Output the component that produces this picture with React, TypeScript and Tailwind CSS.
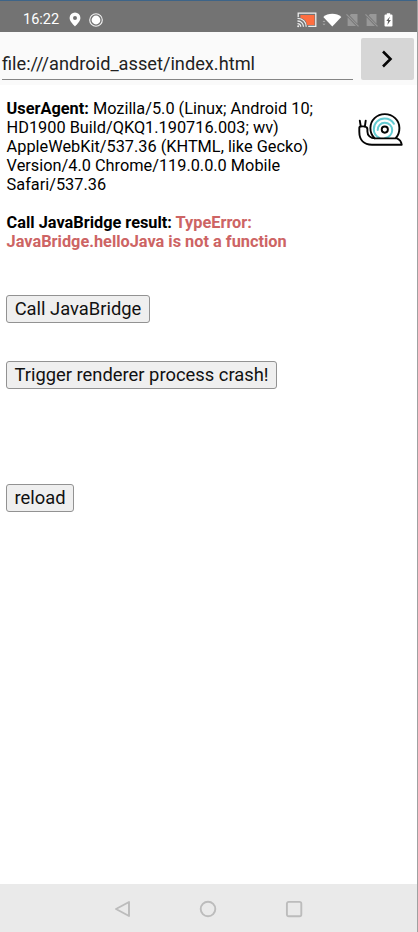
import React from "react";

const Pin = () => (
  <svg width="12" height="15" viewBox="0 0 12 15">
    <path fillRule="evenodd" fill="#fff" d="M6 .5a5.400 5.400 0 0 0-5.400 5.400C.6 9.700 6 14.300 6 14.300s5.400-4.600 5.400-8.400A5.400 5.400 0 0 0 6 .5Zm0 3.400a2 2 0 1 1 0 4 2 2 0 0 1 0-4Z" />
  </svg>
);

const Record = () => (
  <svg width="14" height="14" viewBox="0 0 14 14">
    <circle cx="7" cy="7" r="6.300" fill="none" stroke="#f2f2f2" strokeWidth="1.100" />
    <circle cx="7" cy="7" r="4.400" fill="#fff" />
  </svg>
);

const Cast = () => (
  <svg width="20" height="16" viewBox="0 0 20 16">
    <path fill="#ff6e40" d="M3.500 3h14v10h-7.500A7 7 0 0 0 3.500 6Z" />
    <path fill="none" stroke="#eee" strokeWidth="1.300" d="M1.200 5V1.200h17.600v13.200h-7.600M.5 6.300a8.300 8.300 0 0 1 8.700 8.500M.5 9a5.800 5.800 0 0 1 6 5.800M.5 11.600a3 3 0 0 1 3.200 3.200" />
    <circle cx="1.200" cy="14.300" r="1" fill="#eee" />
  </svg>
);

const Wifi = () => (
  <svg width="20" height="14" viewBox="0 0 20 14">
    <path fill="#fff" d="M1.300 4C5.600-.4 15-.4 19.300 4L10.300 13.600Z" />
    <path fill="#aaa" d="m.5 9 1.500-1.600L3.500 9Zm0 1.700h3L2 12.300Z" />
  </svg>
);

const NoSim = () => (
  <svg width="13" height="14" viewBox="0 0 13 14">
    <path fill="#989898" d="M5 1h6.500v9.700L3.700 2.600ZM1.600 4.300 10 13H1.600Z" />
    <path stroke="#989898" strokeWidth="1.200" d="m.5 1.300 12 12" />
  </svg>
);

const Battery = () => (
  <svg width="9" height="14" viewBox="0 0 9 14">
    <path fill="#fff" d="M2.800.3h3.400v1.300h1.300a1 1 0 0 1 1 1v10a1 1 0 0 1-1 1h-6a1 1 0 0 1-1-1v-10a1 1 0 0 1 1-1h1.300Z" />
    <path fill="#606060" d="M6 3.500 2.300 8h1.800l-.7 4L6.900 7H4.800Z" />
  </svg>
);

const Snail = () => (
  <svg width="46" height="34" viewBox="0.500 0 46 34" fill="none" strokeLinecap="round" strokeLinejoin="round">
    <g stroke="#63cbd2" strokeWidth="2">
      <path d="M22 25C18.700 23.300 16.300 20.200 16.300 16.200c0-6 4.700-10.600 10.700-10.600 4.200 0 7.600 2 9.400 5.200" />
      <path d="M20.200 17c0-4 3-7.200 7-7.200 4.200 0 7.500 3.100 7.500 7.200 0 4.300-3.100 7.500-7 7.900" />
    </g>
    <g stroke="#050505" strokeWidth="1.900">
      <circle cx="27.300" cy="16.600" r="3.100" />
      <path d="M17 25.200a14.300 14.300 0 0 1-4.100-10.200c0-7.900 6.400-13.900 14.400-13.900S41.900 7.200 41.900 15c0 4-1.200 7.500-3.500 10" />
      <path d="M1.800 14.500v4.300C1.800 27 6.500 31.700 14.500 31.700h29.700c-.4-2.900-2-5.200-4.700-6.300H17.500c-4.500 0-7.600-3-7.600-7v-2.500c0-3-8.100-3.200-8.100-1.400Z" />
      <path d="M3.200 13 2.300 7.600M7.400 13.300l.8-5.700" />
    </g>
  </svg>
);

const PageButton = ({ className, children }: { className: string; children: React.ReactNode }) => (
  <button className={`block h-[28px] whitespace-nowrap rounded-[3px] border border-[#929292] bg-[#efefef] text-center text-[18.380px] leading-[26px] text-[#111] ${className}`}>
    {children}
  </button>
);

export default function App() {
  return (
    <div className="flex h-[932px] w-[418px] flex-col overflow-hidden border-r border-[#a0a0a0] bg-white font-['Roboto',sans-serif] text-black">
      <div className="flex h-[32px] shrink-0 items-center border-t border-[#3d6488] bg-[#737373] pt-[6px] pl-[23px]">
        <span className="w-[45.500px] whitespace-nowrap text-[14.500px] leading-[18px] text-white">16:22</span>
        <Pin />
        <div className="ml-[8.500px]"><Record /></div>
        <div className="ml-[194px]"><Cast /></div>
        <div className="ml-[5px]"><Wifi /></div>
        <div className="ml-[4px]"><NoSim /></div>
        <div className="ml-[6px]"><NoSim /></div>
        <div className="ml-[6px]"><Battery /></div>
      </div>

      <header className="flex h-[53px] shrink-0 items-start bg-[#fafafa] pl-[2px]">
        <div className="mt-[16px] h-[32px] w-[351px] whitespace-nowrap border-b border-[#858585] text-[18.220px] leading-[32px] text-[#222]">
          file:///android_asset/index.html
        </div>
        <button className="mt-[6px] ml-[8px] flex h-[42px] w-[53px] items-center justify-center rounded-[2px] bg-[#d6d6d6] pr-[1px]">
          <svg width="12" height="18" viewBox="0 0 12 18" fill="none" stroke="#050505" strokeWidth="2.600">
            <path d="m2 1.500 7.500 7.500L2 16.500" />
          </svg>
        </button>
      </header>

      <main className="flex-1 pl-[6px]">
        <div className="flex pt-[14px]">
          <div className="w-[352px] whitespace-nowrap pl-[0.600px] text-[16.320px] leading-[19px]">
            <p><b>UserAgent:</b> Mozilla/5.0 (Linux; Android 10;</p>
            <p>HD1900 Build/QKQ1.190716.003; wv)</p>
            <p>AppleWebKit/537.36 (KHTML, like Gecko)</p>
            <p>Version/4.0 Chrome/119.0.0.0 Mobile</p>
            <p>Safari/537.36</p>
            <p className="mt-[19px] font-bold">Call JavaBridge result: <span className="text-[#cd6464]">TypeError:</span></p>
            <p className="font-bold text-[#cd6464]">JavaBridge.helloJava is not a function</p>
          </div>
          <div className="mt-[14px]"><Snail /></div>
        </div>
        <PageButton className="mt-[44px] w-[144px]">Call JavaBridge</PageButton>
        <PageButton className="mt-[38px] w-[271px]">Trigger renderer process crash!</PageButton>
        <PageButton className="mt-[95px] w-[68px]">reload</PageButton>
      </main>

      <nav className="flex h-[48px] shrink-0 items-center bg-[#eaeaea] pt-[1px] pl-[114px]">
        <svg width="17" height="18" viewBox="0 0 17 18" fill="none" stroke="#bcbcbc" strokeWidth="1.900" strokeLinejoin="round">
          <path d="M15 2v14L2 9Z" />
        </svg>
        <svg className="ml-[68px]" width="18" height="18" viewBox="0 0 18 18" fill="none" stroke="#bcbcbc" strokeWidth="1.900">
          <circle cx="9" cy="9" r="7.300" />
        </svg>
        <svg className="ml-[68px]" width="18" height="18" viewBox="0 0 18 18" fill="none" stroke="#bcbcbc" strokeWidth="1.900">
          <rect x="1.900" y="1.900" width="14.400" height="14.400" rx="1.800" />
        </svg>
      </nav>
    </div>
  );
}
